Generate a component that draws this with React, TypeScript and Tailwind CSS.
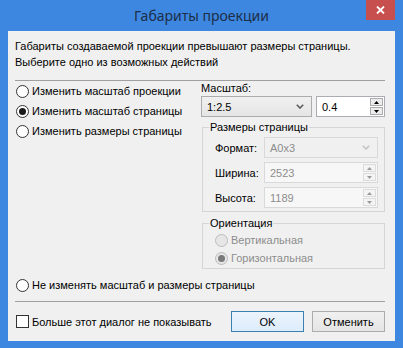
import React from 'react'

// Windows 8 style "projection size" dialog

function Radio({ checked, disabled }: { checked?: boolean; disabled?: boolean }) {
  return (
    <span
      className={`w-[13px] h-[13px] rounded-full border flex items-center justify-center shrink-0 ${
        disabled ? 'border-[#bcbcbc] bg-[#e6e6e6]' : 'border-[#333333] bg-white'
      }`}
    >
      {checked && (
        <span className={`w-[7px] h-[7px] rounded-full ${disabled ? 'bg-[#7a7a7a]' : 'bg-[#1a1a1a]'}`} />
      )}
    </span>
  )
}

function RadioRow({
  label,
  checked,
  disabled,
  h = 'h-[20px]',
}: {
  label: string
  checked?: boolean
  disabled?: boolean
  h?: string
}) {
  return (
    <label className={`flex items-center gap-[3px] ${h} ${disabled ? 'text-[#8d8d8d]' : ''}`}>
      <Radio checked={checked} disabled={disabled} />
      <span>{label}</span>
    </label>
  )
}

function Chevron({ disabled }: { disabled?: boolean }) {
  return (
    <svg width="8" height="5" viewBox="0 0 8 5" className="shrink-0">
      <path
        d="M0.8 0.8 L4 4 L7.2 0.8"
        fill="none"
        stroke={disabled ? '#c4c4c4' : '#5c5c5c'}
        strokeWidth="1.6"
      />
    </svg>
  )
}

function Combo({ value, disabled, className }: { value: string; disabled?: boolean; className: string }) {
  return (
    <div
      className={`h-[21px] flex items-center justify-between pl-[5px] pr-[7px] border ${
        disabled
          ? 'border-[#d9d9d9] bg-[#f0f0f0] text-[#8d8d8d]'
          : 'border-[#acacac] bg-gradient-to-b from-[#f0f0f0] to-[#e5e5e5]'
      } ${className}`}
    >
      <span>{value}</span>
      <Chevron disabled={disabled} />
    </div>
  )
}

function Triangle({ up, disabled }: { up?: boolean; disabled?: boolean }) {
  return (
    <svg width="5" height="3" viewBox="0 0 5 3">
      <path d={up ? 'M0 3 L2.5 0 L5 3 Z' : 'M0 0 L2.5 3 L5 0 Z'} fill={disabled ? '#9a9a9a' : '#000000'} />
    </svg>
  )
}

function Spin({ value, disabled, className }: { value: string; disabled?: boolean; className: string }) {
  return (
    <div
      className={`h-[21px] flex items-stretch border ${
        disabled ? 'border-[#d9d9d9] bg-[#f7f7f7] text-[#8d8d8d]' : 'border-[#abadb3] bg-white'
      } ${className}`}
    >
      <span className="flex-1 flex items-center pl-[5px]">{value}</span>
      <div className="w-[15px] flex flex-col p-[1px] gap-[1px]">
        <div
          className={`flex-1 flex items-center justify-center border ${
            disabled ? 'border-[#dcdcdc] bg-[#f4f4f4]' : 'border-[#acacac] bg-[#ececec]'
          }`}
        >
          <Triangle up disabled={disabled} />
        </div>
        <div
          className={`flex-1 flex items-center justify-center border ${
            disabled ? 'border-[#dcdcdc] bg-[#f4f4f4]' : 'border-[#acacac] bg-[#ececec]'
          }`}
        >
          <Triangle disabled={disabled} />
        </div>
      </div>
    </div>
  )
}

function Group({ title, children }: { title: string; children: React.ReactNode }) {
  return (
    <fieldset className="ml-[1px] border border-[#d5d5d5] pl-[6px]">
      <legend className="px-[1px] leading-[16px]">{title}</legend>
      {children}
    </fieldset>
  )
}

function Button({ label, isDefault }: { label: string; isDefault?: boolean }) {
  return (
    <button
      className={`w-[73px] h-[21px] border flex items-center justify-center ${
        isDefault
          ? 'border-[#3c7fb1] bg-gradient-to-b from-[#ecf4fc] to-[#dcecfc]'
          : 'border-[#acacac] bg-gradient-to-b from-[#f0f0f0] to-[#e5e5e5]'
      }`}
    >
      {label}
    </button>
  )
}

export default function App() {
  return (
    <div className="w-[403px] h-[348px] bg-[#3d87e1] flex flex-col font-['Liberation_Sans',Arial,sans-serif] text-[11px] leading-[16px] text-black whitespace-nowrap">
      {/* title bar */}
      <div className="h-[31px] relative flex items-center justify-center">
        <span className="font-['Noto_Sans',sans-serif] text-[14px] text-[#1c2e48]">Габариты проекции</span>
        <button className="absolute right-[8px] top-0 w-[29px] h-[20px] bg-[#c7504f] flex items-center justify-center">
          <svg width="9" height="8" viewBox="0 0 9 8">
            <path d="M1 0.5 L8 7.5 M8 0.5 L1 7.5" stroke="#ffffff" strokeWidth="1.8" />
          </svg>
        </button>
      </div>

      {/* client area */}
      <div className="mx-[8px] h-[310px] bg-[#f0f0f0] pl-[7px] pr-[10px] pt-[7px] flex flex-col">
        <p>
          Габариты создаваемой проекции превышают размеры страницы.
          <br />
          Выберите одно из возможных действий
        </p>
        <div className="mt-[10px] h-px bg-[#a0a0a0]" />

        <div className="flex">
          <div className="w-[186px] pl-[1px] flex flex-col">
            <RadioRow label="Изменить масштаб проекции" />
            <RadioRow label="Изменить масштаб страницы" checked />
            <RadioRow label="Изменить размеры страницы" />
          </div>

          <div className="flex-1 flex flex-col">
            <div className="h-[14px] leading-[14px]">Масштаб:</div>
            <div className="mt-[1px] flex gap-[4px]">
              <Combo value="1:2.5" className="w-[111px]" />
              <Spin value="0.4" className="flex-1" />
            </div>

            <div className="mt-[2px]">
              <Group title="Размеры страницы">
                <div className="pl-[6px] pr-[6px] pt-[2px] pb-[3px] flex flex-col gap-[4px]">
                  <div className="flex items-center">
                    <span className="w-[49px]">Формат:</span>
                    <Combo value="A0x3" disabled className="flex-1" />
                  </div>
                  <div className="flex items-center">
                    <span className="w-[49px]">Ширина:</span>
                    <Spin value="2523" disabled className="flex-1" />
                  </div>
                  <div className="flex items-center">
                    <span className="w-[49px]">Высота:</span>
                    <Spin value="1189" disabled className="flex-1" />
                  </div>
                </div>
              </Group>
            </div>

            <div className="mt-[3px]">
              <Group title="Ориентация">
                <div className="pl-[6px] pb-[1px] flex flex-col">
                  <RadioRow label="Вертикальная" disabled h="h-[18px]" />
                  <RadioRow label="Горизонтальная" disabled checked h="h-[18px]" />
                </div>
              </Group>
            </div>
          </div>
        </div>

        <div className="mt-[6px] pl-[1px]">
          <RadioRow label="Не изменять масштаб и размеры страницы" />
        </div>
        <div className="mt-[6px] h-px bg-[#a0a0a0]" />

        <div className="mt-[9px] flex items-center">
          <label className="flex-1 pl-[1px] flex items-center gap-[3px]">
            <span className="w-[13px] h-[13px] border border-[#333333] bg-white shrink-0" />
            <span>Больше этот диалог не показывать</span>
          </label>
          <div className="flex gap-[8px]">
            <Button label="OK" isDefault />
            <Button label="Отменить" />
          </div>
        </div>
      </div>
    </div>
  )
}
